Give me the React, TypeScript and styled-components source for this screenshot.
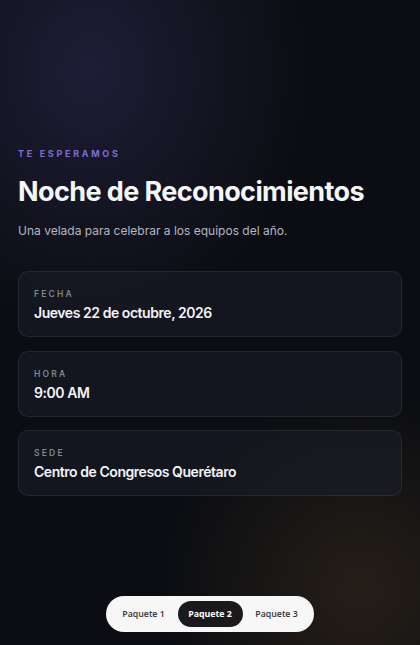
import React, { useState } from "react";
import styled, { createGlobalStyle } from "styled-components";

const Global = createGlobalStyle`
  html, body { margin: 0; padding: 0; background: #0b0d12; }
  * { box-sizing: border-box; }
`;

const Page = styled.div`
  position: relative;
  width: 420px;
  height: 645px;
  overflow: hidden;
  background:
    radial-gradient(ellipse 220px 260px at 90px 70px, rgba(48, 42, 84, 0.55), rgba(48, 42, 84, 0) 100%),
    radial-gradient(ellipse 200px 200px at 360px 590px, rgba(70, 52, 30, 0.45), rgba(70, 52, 30, 0) 100%),
    #0b0d12;
  font-family: Inter, "Liberation Sans", sans-serif;
  display: flex;
  flex-direction: column;
`;

const Content = styled.main`
  display: flex;
  flex-direction: column;
  padding: 148px 18px 0;
`;

const Eyebrow = styled.div`
  font-size: 9px;
  font-weight: 700;
  letter-spacing: 2.7px;
  color: #7b6fd6;
  line-height: 12px;
`;

const Title = styled.h1`
  margin: 15px 0 0;
  font-size: 27px;
  font-weight: 700;
  letter-spacing: -0.6px;
  color: #f5f6f8;
  line-height: 34px;
`;

const Subtitle = styled.p`
  margin: 14px 0 0;
  font-size: 12px;
  color: #b3b7c2;
  line-height: 16px;
`;

const Cards = styled.div`
  margin-top: 32px;
  display: flex;
  flex-direction: column;
  gap: 13.5px;
`;

const Card = styled.section`
  height: 66px;
  border-radius: 10px;
  border: 1px solid rgba(255, 255, 255, 0.07);
  background: rgba(28, 31, 40, 0.55);
  padding: 17px 15px 0;
  display: flex;
  flex-direction: column;
  gap: 3px;
`;

const Label = styled.div`
  font-size: 8.5px;
  font-weight: 600;
  letter-spacing: 2.2px;
  color: #80858f;
  line-height: 11px;
`;

const Value = styled.div`
  font-size: 14px;
  font-weight: 600;
  letter-spacing: -0.45px;
  color: #f3f4f6;
  line-height: 20px;
`;

const Tabs = styled.nav`
  position: absolute;
  left: 106px;
  top: 596px;
  width: 208px;
  height: 36px;
  border-radius: 18px;
  background: #f7f7f7;
  display: flex;
  align-items: center;
  justify-content: space-between;
  padding: 0 5px;
`;

const Tab = styled.button<{ $active?: boolean }>`
  border: none;
  height: 26px;
  width: 65px;
  border-radius: 13px;
  background: ${(p) => (p.$active ? "#1a1a1c" : "transparent")};
  color: ${(p) => (p.$active ? "#ffffff" : "#333338")};
  font-family: "Open Sans", "Noto Sans", sans-serif;
  font-size: 8.8px;
  font-weight: ${(p) => (p.$active ? 700 : 600)};
  padding: 0;
  cursor: pointer;
`;

const items = [
  { label: "FECHA", value: "Jueves 22 de octubre, 2026" },
  { label: "HORA", value: "9:00 AM" },
  { label: "SEDE", value: "Centro de Congresos Querétaro" },
];

export default function App() {
  const [active, setActive] = useState(1);
  return (
    <Page>
      <Global />
      <Content>
        <Eyebrow>TE ESPERAMOS</Eyebrow>
        <Title>Noche de Reconocimientos</Title>
        <Subtitle>Una velada para celebrar a los equipos del año.</Subtitle>
        <Cards>
          {items.map((it) => (
            <Card key={it.label}>
              <Label>{it.label}</Label>
              <Value>{it.value}</Value>
            </Card>
          ))}
        </Cards>
      </Content>
      <Tabs>
        {["Paquete 1", "Paquete 2", "Paquete 3"].map((t, i) => (
          <Tab key={t} $active={i === active} onClick={() => setActive(i)}>
            {t}
          </Tab>
        ))}
      </Tabs>
    </Page>
  );
}
